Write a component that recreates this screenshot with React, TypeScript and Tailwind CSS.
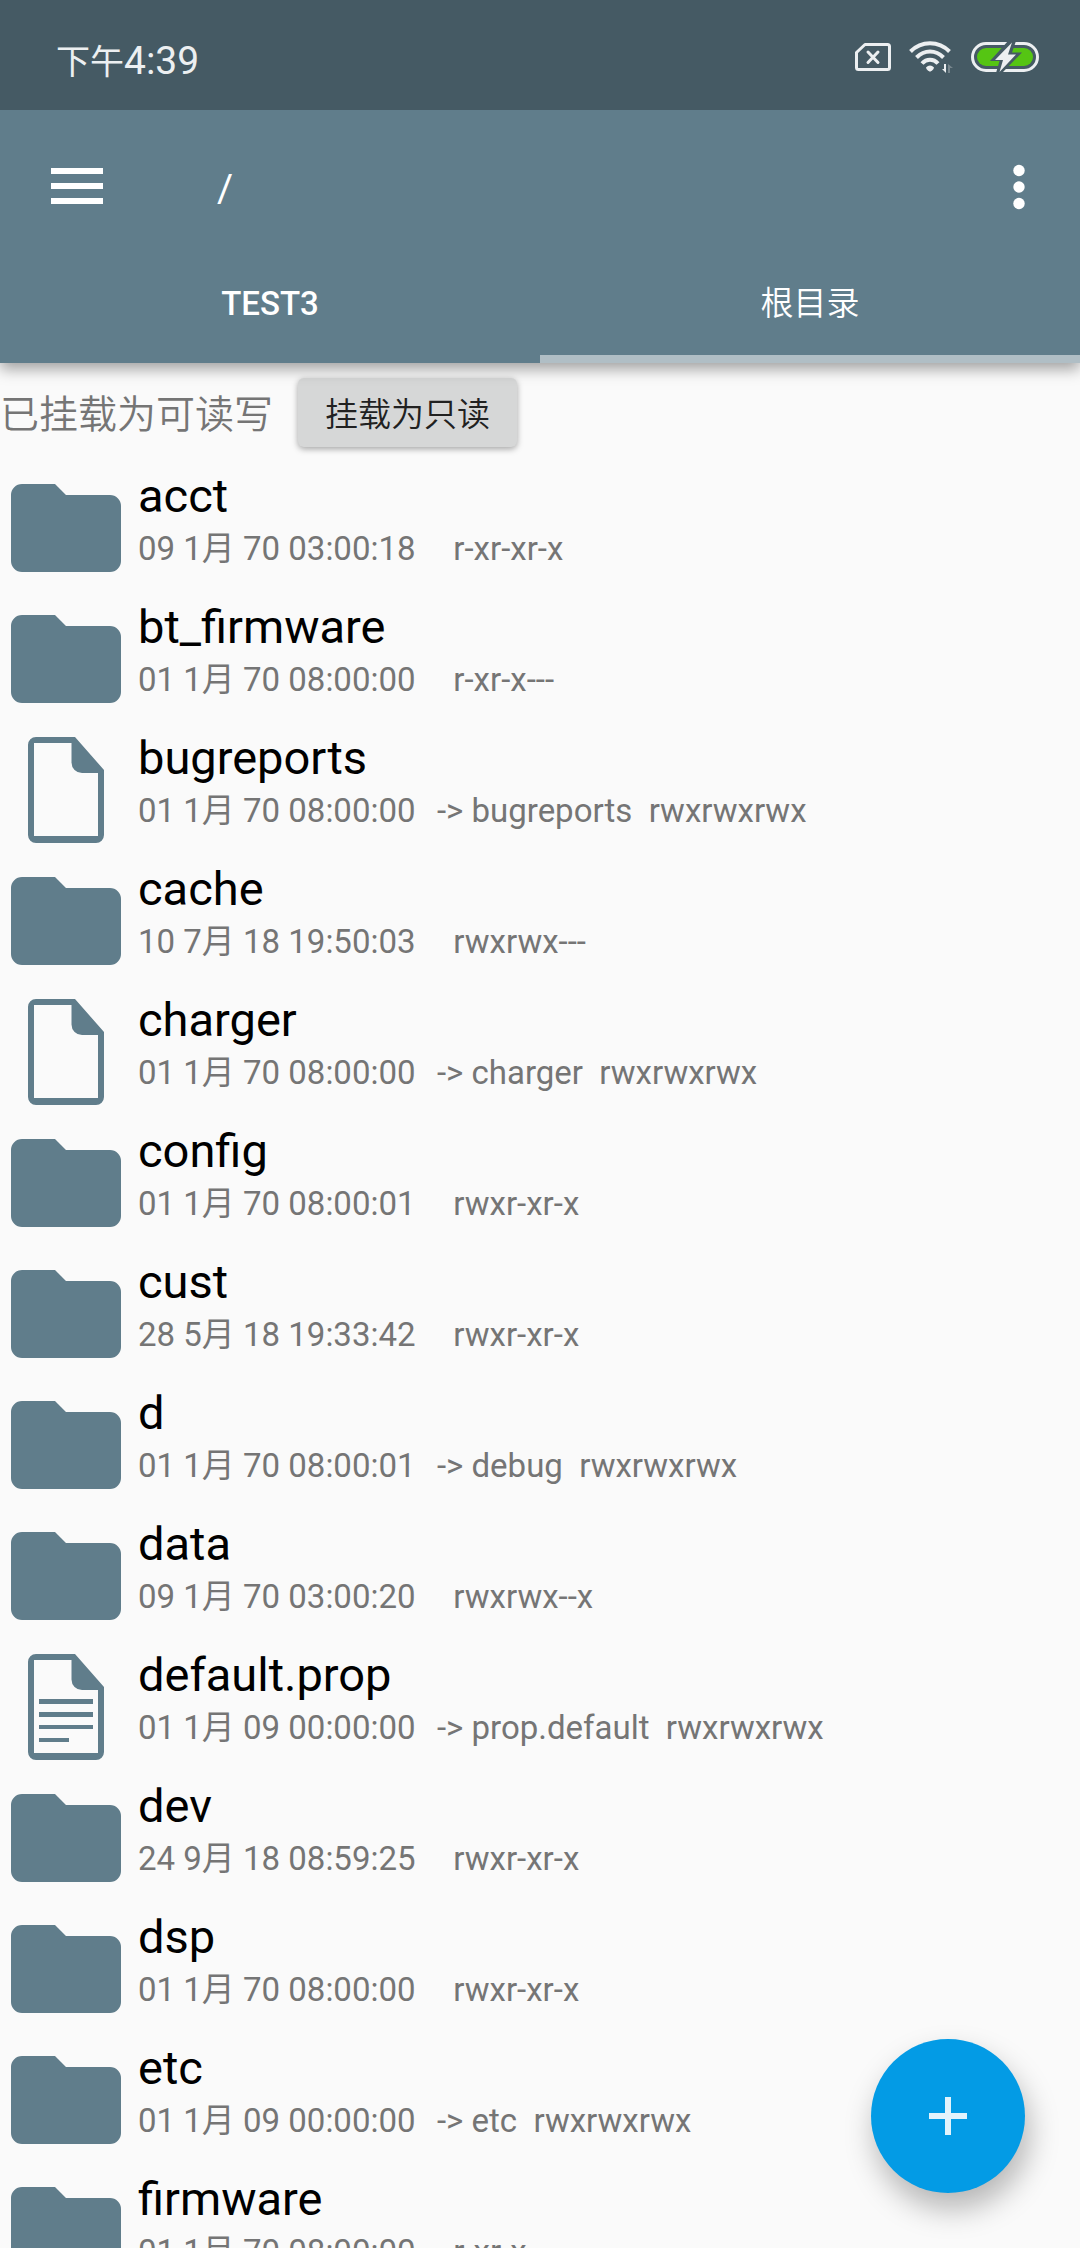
type Kind = 'folder' | 'file' | 'text';

interface Entry {
  name: string;
  date: string;
  mode: string;
  link?: string;
  kind: Kind;
}

const entries: Entry[] = [
  { name: 'acct', date: '09 1月 70 03:00:18', mode: 'r-xr-xr-x', kind: 'folder' },
  { name: 'bt_firmware', date: '01 1月 70 08:00:00', mode: 'r-xr-x---', kind: 'folder' },
  { name: 'bugreports', date: '01 1月 70 08:00:00', link: 'bugreports', mode: 'rwxrwxrwx', kind: 'file' },
  { name: 'cache', date: '10 7月 18 19:50:03', mode: 'rwxrwx---', kind: 'folder' },
  { name: 'charger', date: '01 1月 70 08:00:00', link: 'charger', mode: 'rwxrwxrwx', kind: 'file' },
  { name: 'config', date: '01 1月 70 08:00:01', mode: 'rwxr-xr-x', kind: 'folder' },
  { name: 'cust', date: '28 5月 18 19:33:42', mode: 'rwxr-xr-x', kind: 'folder' },
  { name: 'd', date: '01 1月 70 08:00:01', link: 'debug', mode: 'rwxrwxrwx', kind: 'folder' },
  { name: 'data', date: '09 1月 70 03:00:20', mode: 'rwxrwx--x', kind: 'folder' },
  { name: 'default.prop', date: '01 1月 09 00:00:00', link: 'prop.default', mode: 'rwxrwxrwx', kind: 'text' },
  { name: 'dev', date: '24 9月 18 08:59:25', mode: 'rwxr-xr-x', kind: 'folder' },
  { name: 'dsp', date: '01 1月 70 08:00:00', mode: 'rwxr-xr-x', kind: 'folder' },
  { name: 'etc', date: '01 1月 09 00:00:00', link: 'etc', mode: 'rwxrwxrwx', kind: 'folder' },
  { name: 'firmware', date: '01 1月 70 08:00:00', mode: 'r-xr-x---', kind: 'folder' },
];

function EntryIcon({ kind }: { kind: Kind }) {
  return (
    <svg viewBox="0 0 132 132" className="size-[132px] shrink-0 fill-[#607d8b]" aria-hidden="true">
      {kind === 'folder' ? (
        <path d="M22 22H55L66 33H110A11 11 0 0 1 121 44V99A11 11 0 0 1 110 110H22A11 11 0 0 1 11 99V33A11 11 0 0 1 22 22Z" />
      ) : (
        <>
          <path
            fillRule="evenodd"
            d="M36 13H75L104 46V111A8 8 0 0 1 96 119H36A8 8 0 0 1 28 111V21A8 8 0 0 1 36 13ZM34 19V112H98V49H82A10.500 10.500 0 0 1 71.500 38.500V19Z"
          />
          {kind === 'text' && <path d="M39 58H93V63H39ZM39 71H93V76H39ZM39 84H93V88H39ZM39 97H69V101H39Z" />}
        </>
      )}
    </svg>
  );
}

function SimIcon() {
  return (
    <svg viewBox="0 0 36 28" className="h-[28px] w-[36px]" fill="none" stroke="#eceff1" aria-hidden="true">
      <path d="M10 1.500H32.500A2 2 0 0 1 34.500 3.500V24.500A2 2 0 0 1 32.500 26.500H3.500A2 2 0 0 1 1.500 24.500V9.500Z" strokeWidth="3" strokeLinejoin="round" />
      <path d="M13 9L23 19.500M23 9L13 19.500" strokeWidth="3" strokeLinecap="round" />
    </svg>
  );
}

function WifiIcon() {
  return (
    <svg viewBox="0 0 44 32" className="h-[32px] w-[44px]" fill="none" aria-hidden="true">
      <g stroke="#eceff1" strokeWidth="4">
        <path d="M1.500 10.500C12.500 -0.500 29.500 -0.500 40.500 10.500" />
        <path d="M7.500 16.500C15.500 8.500 26.500 8.500 34.500 16.500" />
        <path d="M13 22.500C17.500 17.500 24.500 17.500 29 22.500" />
      </g>
      <path d="M17 26.500C19.500 23.700 22.500 23.700 25 26.500C25 28 22.500 30.500 21 30.500C19.500 30.500 17 28 17 26.500Z" fill="#eceff1" />
      <path d="M35 23H37V32L33 28H35Z" fill="#eceff1" />
      <path d="M39 23V32H41V27H44Z" fill="#77868d" />
    </svg>
  );
}

function BatteryIcon() {
  return (
    <svg viewBox="0 0 68 32" className="h-[32px] w-[68px]" aria-hidden="true">
      <rect x="1.500" y="2.500" width="65" height="27" rx="13.500" fill="none" stroke="#eceff1" strokeWidth="3" />
      <rect x="6" y="7" width="56" height="18" rx="9" fill="#55c513" />
      <path d="M37 0L19 20H28.500L25 32H31L51 11.500H41L45 0Z" fill="#455a64" />
      <path d="M41 1.500L24 19H32L28.500 31L45 13.500H37Z" fill="#eceff1" />
    </svg>
  );
}

export default function App() {
  return (
    <div className="flex h-screen flex-col overflow-hidden bg-[#fafafa] font-['Roboto','Noto_Sans_CJK_SC',sans-serif]">
      <div className="relative z-20 flex h-[110px] shrink-0 items-center justify-between bg-[#455a64] pr-[41px] pl-[56px] text-[#eceff1]">
        <div className="flex items-baseline pt-3">
          <span className="text-[34px]">下午</span>
          <span className="text-[39px]">4:39</span>
        </div>
        <div className="flex items-center gap-[18px] pt-1">
          <SimIcon />
          <WifiIcon />
          <BatteryIcon />
        </div>
      </div>

      <header className="relative z-10 shrink-0 bg-[#607d8b] text-white shadow-[0_6px_14px_rgba(0,0,0,0.36)]">
        <div className="flex h-[154px] items-center pr-[39px] pl-[44px]">
          <button type="button" aria-label="打开菜单" className="flex size-[66px] items-center justify-center">
            <svg viewBox="0 0 66 66" className="size-[66px] fill-white" aria-hidden="true">
              <path d="M7 14H59V20H7ZM7 29H59V35H7ZM7 44H59V50H7Z" />
            </svg>
          </button>
          <h1 className="flex-1 pt-1 pl-[107px] text-[39px]">/</h1>
          <button type="button" aria-label="更多选项" className="flex h-[66px] w-[44px] items-center justify-center">
            <svg viewBox="0 0 44 66" className="h-[66px] w-[44px] fill-white" aria-hidden="true">
              <circle cx="22" cy="16.500" r="5.700" />
              <circle cx="22" cy="33" r="5.700" />
              <circle cx="22" cy="49.500" r="5.700" />
            </svg>
          </button>
        </div>
        <nav role="tablist" className="grid h-[99px] grid-cols-2 text-[33px] leading-[39px]">
          <button type="button" role="tab" aria-selected="false" className="border-b-8 border-transparent pb-3 font-medium">
            TEST3
          </button>
          <button type="button" role="tab" aria-selected="true" className="border-b-8 border-[#b0bec5] pb-3 font-[350]">
            根目录
          </button>
        </nav>
      </header>

      <main className="min-h-0 flex-1 overflow-hidden">
        <div className="flex items-center gap-[25px] py-[15px]">
          <span className="pt-[4px] text-[39px] leading-[46px] font-[350] text-[#757575]">已挂载为可读写</span>
          <button
            type="button"
            className="h-[69px] rounded-[6px] bg-[#d6d7d7] px-[27px] pt-[3px] text-[33px] leading-[39px] font-[350] text-[#212121] shadow-[0_2px_6px_rgba(0,0,0,0.35)]"
          >
            挂载为只读
          </button>
        </div>
        <ul>
          {entries.map((entry) => (
            <li key={entry.name} className="flex h-[131px] items-start gap-[6px]">
              <EntryIcon kind={entry.kind} />
              <div className="min-w-0 flex-1 pt-[5px] whitespace-pre">
                <div className="text-[47px] leading-[58px] text-black">{entry.name}</div>
                <div className="flex gap-[5px] text-[33px] leading-[48px] text-[#757575]">
                  <span>{entry.date}</span>
                  <span>{entry.link ? `  -> ${entry.link}  ${entry.mode}` : `    ${entry.mode}`}</span>
                </div>
              </div>
            </li>
          ))}
        </ul>
      </main>

      <button
        type="button"
        aria-label="新建"
        className="fixed right-[55px] bottom-[55px] flex size-[154px] items-center justify-center rounded-full bg-[#039be5] shadow-[4px_16px_30px_rgba(0,0,0,0.28)]"
      >
        <svg viewBox="0 0 40 40" className="size-[40px] fill-[#e1f3fc]" aria-hidden="true">
          <path d="M17 1H23V17H39V23H23V39H17V23H1V17H17Z" />
        </svg>
      </button>
    </div>
  );
}
